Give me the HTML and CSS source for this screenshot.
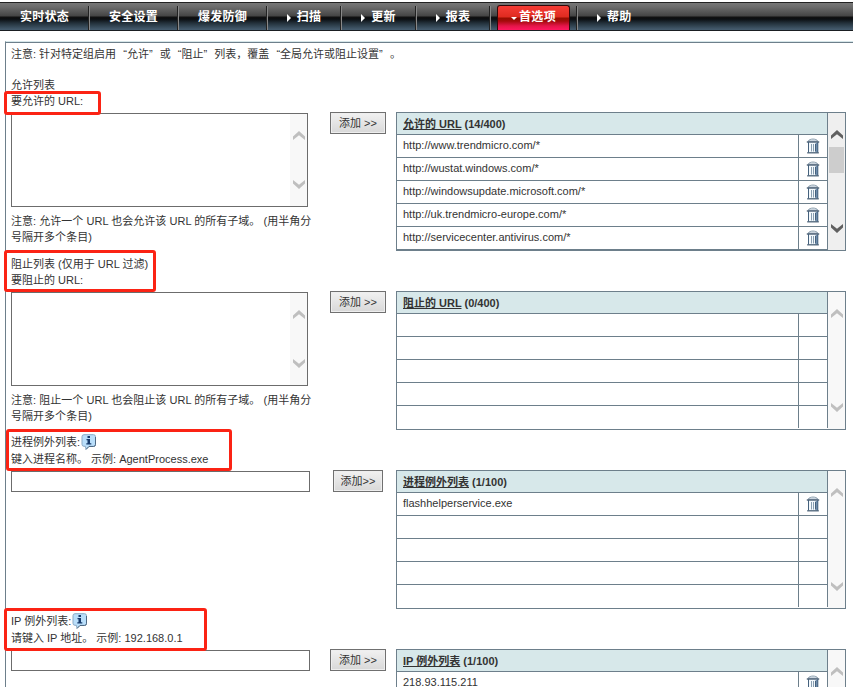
FILE: index.html
```html
<!DOCTYPE html>
<html lang="zh-CN">
<head>
<meta charset="utf-8">
<title>首选项</title>
<link rel="stylesheet" href="styles.css">
</head>
<body>
<svg class="defs" width="0" height="0">
  <symbol id="up" viewBox="0 0 12 9"><path d="M0 9V5.600L6 0l6 5.600V9L6 4.300z" fill="currentColor"/></symbol>
  <symbol id="down" viewBox="0 0 12 9"><path d="M0 0v3.400L6 9l6-5.600V0L6 4.700z" fill="currentColor"/></symbol>
  <symbol id="trash" viewBox="0 0 14 16">
    <path d="M2.500 4h9v10.500h-9z" fill="#f4f9fd"/>
    <path d="M9.500 5h2.500v9.500H9.500z" fill="#6f8dad"/>
    <path d="M2 3.200C4 .3 10 .3 12 3.200z" fill="#e6eef4" stroke="#8195a5" stroke-width=".9"/>
    <path d="M.8 4h12.400" stroke="#3d5369" stroke-width="1.300"/>
    <path d="M2.500 4v10.500M11.800 4v10.500" stroke="#45617c" fill="none"/>
    <path d="M5.500 6v7.500M7.500 6v7.500" stroke="#7b93a8" stroke-width=".9"/>
    <path d="M9.500 6v7.500" stroke="#45617c"/>
    <path d="M1.200 14.800h11.600" stroke="#4a6177" stroke-width="1.300"/>
  </symbol>
  <symbol id="info" viewBox="0 0 16 16">
    <path d="M3 .7h9.500q2 0 2 2v7.600q0 2-2 2H8l-3 3-.6-3H3q-2 0-2-2V2.700q0-2 2-2z" fill="#b9defa" stroke="#8ba9c4"/>
    <path d="M14.500 3v7.500q0 2-2 2H8l-3 3" fill="none" stroke="#4d6882"/>
    <path d="M6.500 2h2.500v2H6.500zM5.500 5H9v4.200h1.300v1.300H5.300V9.200h1.200V6.200h-1z" fill="#173b6c"/>
  </symbol>
</svg>
<nav class="nav">
  <a class="tab w89">实时状态</a>
  <a class="tab w89">安全设置</a>
  <a class="tab w89">爆发防御</a>
  <a class="tab w74"><i class="right"></i>扫描</a>
  <a class="tab w75"><i class="right"></i>更新</a>
  <a class="tab w74"><i class="right"></i>报表</a>
  <a class="tab w87 holder"><span class="active"><i class="caret"></i>首选项</span></a>
  <a class="tab last"><i class="right"></i>帮助</a>
</nav>
<main class="panel">
  <p class="intro">注意: 针对特定组启用<span class="q open">“</span>允许<span class="q close">”</span>或<span class="q open">“</span>阻止<span class="q close">”</span>列表，覆盖<span class="q open">“</span>全局允许或阻止设置<span class="q close">”</span>。</p>

  <section class="group">
    <div class="labels"><div>允许列表</div><div>要允许的 URL:</div></div>
    <div class="fields">
      <div class="entry">
        <div class="area"><div class="scroll"><svg><use href="#up"/></svg><svg><use href="#down"/></svg></div></div>
        <p class="note">注意: 允许一个 URL 也会允许该 URL 的所有子域。 (用半角分<br>号隔开多个条目)</p>
      </div>
      <button class="add">添加 &gt;&gt;</button>
      <div class="list full">
        <div class="rows">
          <div class="head"><u>允许的 URL</u> (14/400)</div>
          <div class="row"><span>http://www.trendmicro.com/*</span><b><svg><use href="#trash"/></svg></b></div>
          <div class="row"><span>http://wustat.windows.com/*</span><b><svg><use href="#trash"/></svg></b></div>
          <div class="row"><span>http://windowsupdate.microsoft.com/*</span><b><svg><use href="#trash"/></svg></b></div>
          <div class="row"><span>http://uk.trendmicro-europe.com/*</span><b><svg><use href="#trash"/></svg></b></div>
          <div class="row"><span>http://servicecenter.antivirus.com/*</span><b><svg><use href="#trash"/></svg></b></div>
        </div>
        <div class="scroll on"><svg><use href="#up"/></svg><div class="thumb"></div><svg><use href="#down"/></svg></div>
      </div>
    </div>
    <div class="mark m1"></div>
  </section>

  <section class="group">
    <div class="labels"><div>阻止列表 (仅用于 URL 过滤)</div><div>要阻止的 URL:</div></div>
    <div class="fields">
      <div class="entry">
        <div class="area"><div class="scroll"><svg><use href="#up"/></svg><svg><use href="#down"/></svg></div></div>
        <p class="note">注意: 阻止一个 URL 也会阻止该 URL 的所有子域。 (用半角分<br>号隔开多个条目)</p>
      </div>
      <button class="add">添加 &gt;&gt;</button>
      <div class="list">
        <div class="rows">
          <div class="head"><u>阻止的 URL</u> (0/400)</div>
          <div class="row"><span></span><b></b></div>
          <div class="row"><span></span><b></b></div>
          <div class="row"><span></span><b></b></div>
          <div class="row"><span></span><b></b></div>
          <div class="row"><span></span><b></b></div>
        </div>
        <div class="scroll"><svg><use href="#up"/></svg><svg><use href="#down"/></svg></div>
      </div>
    </div>
    <div class="mark m2"></div>
  </section>

  <section class="group">
    <div class="labels info"><div>进程例外列表:<svg><use href="#info"/></svg></div><div>键入进程名称。 示例: AgentProcess.exe</div></div>
    <div class="fields">
      <div class="entry"><input class="text" type="text"></div>
      <button class="add narrow">添加&gt;&gt;</button>
      <div class="list">
        <div class="rows">
          <div class="head"><u>进程例外列表</u> (1/100)</div>
          <div class="row"><span>flashhelperservice.exe</span><b><svg><use href="#trash"/></svg></b></div>
          <div class="row"><span></span><b></b></div>
          <div class="row"><span></span><b></b></div>
          <div class="row"><span></span><b></b></div>
          <div class="row"><span></span><b></b></div>
        </div>
        <div class="scroll"><svg><use href="#up"/></svg><svg><use href="#down"/></svg></div>
      </div>
    </div>
    <div class="mark m3"></div>
  </section>

  <section class="group">
    <div class="labels info"><div>IP 例外列表:<svg><use href="#info"/></svg></div><div>请键入 IP 地址。 示例: 192.168.0.1</div></div>
    <div class="fields">
      <div class="entry"><input class="text" type="text"></div>
      <button class="add">添加 &gt;&gt;</button>
      <div class="list">
        <div class="rows">
          <div class="head"><u>IP 例外列表</u> (1/100)</div>
          <div class="row"><span>218.93.115.211</span><b><svg><use href="#trash"/></svg></b></div>
        </div>
        <div class="scroll"><svg><use href="#up"/></svg><svg><use href="#down"/></svg></div>
      </div>
    </div>
    <div class="mark m4"></div>
  </section>
</main>
</body>
</html>
```
FILE: styles.css
```css
* { box-sizing: border-box; }
html, body { margin: 0; height: 687px; overflow: hidden; background: #fff; }
body {
  display: flex;
  flex-direction: column;
  padding-top: 2px;
  color: #333;
  font: 11px/16px "Liberation Sans", "Noto Sans CJK SC", sans-serif;
}
p { margin: 0; }
.defs { position: absolute; }

.nav {
  display: flex;
  flex: none;
  height: 29px;
  border-top: 1px solid #222;
  border-bottom: 1px solid #1a1e22;
  background: linear-gradient(#777 0, #6b6b6b 4px, #444 13px, #111 14px, #0b0e11 16px, #22303a 20px, #42586a 26px, #465d6f 27px);
}
.tab {
  display: flex;
  flex: none;
  justify-content: center;
  position: relative;
  height: 27px;
  padding-top: 6px;
  color: #fff;
  font-size: 12px;
  font-weight: bold;
  letter-spacing: .3px;
  line-height: 16px;
  white-space: nowrap;
}
.tab:not(.last)::after {
  content: "";
  position: absolute;
  right: -1px;
  top: 3px;
  width: 2px;
  height: 24px;
  background: linear-gradient(90deg, #222 50%, #888 50%);
}
.w89 { width: 89px; }
.w74 { width: 74px; }
.w75 { width: 75px; }
.w87 { width: 87px; }
.right {
  width: 0;
  height: 0;
  margin: 5px 6px 0 0;
  border: solid transparent;
  border-width: 4px 0 4px 4px;
  border-left-color: #fff;
}
.last { padding-left: 20px; }
.holder { justify-content: flex-start; padding: 2px 0 0 7px; }
.active {
  display: flex;
  justify-content: center;
  width: 73px;
  height: 25px;
  padding-top: 3px;
  border: 1px solid #32090a;
  border-bottom: 0;
  border-radius: 3px 3px 0 0;
  background: linear-gradient(#f53c35 0, #df2b20 11px, #970e00 12px, #a40b0b 15px, #e5154a 20px, #ff1860 24px);
}
.caret {
  height: 0;
  margin: 8px 2px 0 0;
  border: solid transparent;
  border-width: 3px 3px 0;
  border-top-color: #fff;
}

.panel {
  flex: none;
  margin: 10px 0 0 5px;
  border-top: 1px solid #d6e6e9;
  border-left: 1px solid #6d7f8b;
  box-shadow: inset 0 1px #6d7f8b;
}
.intro { height: 34px; padding: 4px 0 0 5px; white-space: nowrap; }
.q { display: inline-block; width: 10.8px; }
.open { text-align: right; }
.close { text-align: left; }

.group { position: relative; height: 179px; padding: 1px 0 0 5px; }
.labels { height: 35px; white-space: nowrap; }
.labels svg { width: 16px; height: 16px; margin-left: 1px; vertical-align: top; }
.labels.info { height: 36px; margin-top: -1px; }
.info > div { height: 17px; }
.fields {
  display: grid;
  grid-template-columns: 304px 81px 450px;
  align-items: start;
}
.entry { padding-top: 1px; }
.area {
  display: flex;
  justify-content: flex-end;
  width: 297px;
  height: 94px;
  border: 1px solid #6c6c6c;
}
.note { padding-top: 6px; letter-spacing: .03px; white-space: nowrap; }
.text { display: block; width: 299px; height: 21px; border: 1px solid #6c6c6c; outline: 0; padding: 0 3px; }
.scroll {
  display: flex;
  flex-direction: column;
  align-items: center;
  justify-content: space-between;
  width: 17px;
  padding: 17px 0;
  background: #f8f8f8;
  color: #bfbfbf;
}
.scroll svg { flex: none; width: 12px; height: 9px; }
.add {
  justify-self: center;
  width: 56px;
  height: 22px;
  margin-left: 5px;
  padding: 0;
  border: 1px solid #707070;
  background: linear-gradient(#f1f1f1, #d8d8d8);
  box-shadow: inset 0 0 0 1px #eee;
  color: #333;
  font: inherit;
  white-space: nowrap;
}
.narrow { width: 50px; }

.list {
  display: grid;
  grid-template-columns: 431px 17px;
  height: 139px;
  border: 1px solid #6d7f8b;
}
.rows { border-right: 1px solid #6d7f8b; height: 136px; }
.head { height: 21px; padding: 3px 0 0 6px; background: #d7e8ea; font-weight: bold; line-height: 16px; }
.row {
  display: flex;
  height: 23px;
  border-top: 1px solid #6d7f8b;
}
.row span { width: 401px; padding: 2px 0 0 6px; }
.row b { display: flex; width: 29px; padding: 3px 0 0 7px; border-left: 1px solid #6d7f8b; }
.row svg { width: 14px; height: 16px; }
.full .rows { height: 137px; border-bottom: 1px solid #6d7f8b; }
.list .scroll { padding: 17px 0; }
.on { background: #efefef; color: #606060; justify-content: flex-start; }
.on .thumb + svg { margin-top: auto; }
.thumb { width: 15px; height: 26px; margin-top: 8px; background: #cdcdcd; }

.mark { position: absolute; border: 3px solid #fb2314; border-radius: 3px; }
.m1 { left: -2px; top: 15px; width: 97px; height: 24px; }
.m2 { left: -2px; top: -5px; width: 152px; height: 42px; }
.m3 { left: 0; top: -5px; width: 226px; height: 42px; }
.m4 { left: -2px; top: -5px; width: 203px; height: 43px; }
```
